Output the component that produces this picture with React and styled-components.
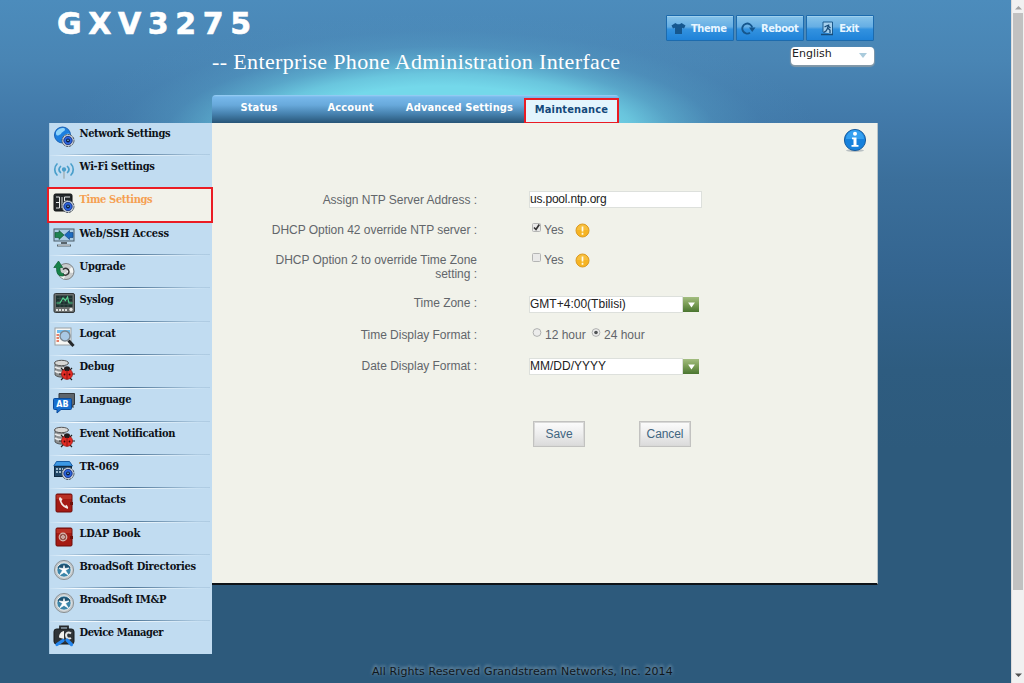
import React from 'react';
import styled, { createGlobalStyle } from 'styled-components';

const Global = createGlobalStyle`
  * { box-sizing: border-box; }
  body { margin: 0; overflow: hidden; background: #2d5a7c; font-family: "Liberation Sans", Arial, sans-serif; }
`;

const verdana = '"DejaVu Sans Condensed", "DejaVu Sans", Verdana, sans-serif';

const Screen = styled.div`
  display: flex;
  width: 1024px;
  height: 683px;
`;
const Page = styled.div`
  flex: 1;
  padding: 0 133px 0 49px;
  background:
    radial-gradient(ellipse 315px 104px at 442px 138px, #74d8ea 0%, #74d8ea 50%, rgba(112, 210, 230, 0.85) 62%, rgba(104, 196, 222, 0.55) 74%, rgba(92, 172, 208, 0.28) 88%, rgba(82, 152, 196, 0.1) 103%, rgba(76, 139, 187, 0) 120%),
    linear-gradient(#4c8cbc 0, #4985b4 60px, #427aaa 115px, #3b6f9b 180px, #346590 270px, #2e5c80 370px, #2d5a7c 450px);
`;
const Header = styled.header`
  display: flex;
  justify-content: space-between;
  height: 95px;
`;
const Brand = styled.div`
  display: flex;
  flex-direction: column;
  color: #fff;
`;
const Model = styled.h1`
  margin: 5px 0 0 8px;
  font: bold 30px/37px "DejaVu Sans", Verdana, sans-serif;
  letter-spacing: 6.6px;
  -webkit-text-stroke: 0.6px #fff;
`;
const Tagline = styled.div`
  margin: 6px 0 0 163px;
  font: 22px/28px "Liberation Serif", Georgia, serif;
  letter-spacing: 0.37px;
  white-space: nowrap;
`;
const Tools = styled.div`
  display: flex;
  flex-direction: column;
  align-items: flex-end;
  padding: 15px 4px 0 0;
`;
const ToolRow = styled.div`
  display: flex;
  gap: 2px;
`;
const ToolButton = styled.button`
  display: flex;
  align-items: center;
  justify-content: ${p => (p.$center ? 'center' : 'flex-start')};
  gap: 5px;
  width: 68px;
  height: 26px;
  padding: 1px 0 0 ${p => (p.$center ? 0 : 4)}px;
  border: 1px solid #1c6bae;
  border-radius: 1px;
  background: linear-gradient(#86c3ea 0, #65aee4 45%, #3392df 55%, #1f82d8 100%);
  box-shadow: inset 0 1px #9fd0ee;
  color: #e8f6ff;
  font: bold 11px/14px ${verdana};
  letter-spacing: -0.4px;
`;
const LanguageSelect = styled.div`
  display: flex;
  justify-content: space-between;
  width: 83px;
  height: 18px;
  margin-top: 6px;
  padding: 0 7px 0 1px;
  border-radius: 4px;
  background: #fff;
  box-shadow: 0 1px 1px 1px #8499a8;
  color: #222;
  font: 11px/14px "DejaVu Sans", Verdana, sans-serif;
  svg { margin-top: 6px; }
`;
const TabBar = styled.nav`
  display: flex;
  position: relative;
  width: 407px;
  height: 28px;
  margin-left: 163px;
  border-radius: 4px 4px 0 0;
  background: linear-gradient(#9bd0f5 0, #77b8eb 2px, #68a9db 10px, #4681ae 19px, #285577 28px);
`;
const Tab = styled.a`
  width: ${p => p.$w}px;
  color: #fff;
  text-align: center;
  font: bold 11px/25px ${verdana};
  letter-spacing: 0.15px;
  white-space: nowrap;
`;
const ActiveTab = styled(Tab)`
  align-self: flex-start;
  height: 26px;
  margin-top: 3px;
  border: 2px solid #ea1c24;
  background: #e3f5fd;
  color: #14497a;
  line-height: 20px;
`;
const Body = styled.div`
  display: flex;
  align-items: flex-start;
  height: 531px;
`;
const Sidebar = styled.ul`
  position: relative;
  z-index: 1;
  width: 163px;
  height: 531px;
  margin: 0;
  padding: 0;
  list-style: none;
  background: #c1dcf1;
  border-left: 1px solid #a9cbe4;
`;
const Item = styled.li`
  display: flex;
  height: 33.3px;
  padding: 3px 0 0 3px;
  gap: 4.5px;
  color: #0d1117;
  font: bold 11px/15px "DejaVu Serif Condensed", "DejaVu Serif", Georgia, serif;
  letter-spacing: ${p => p.$ls}px;
  white-space: nowrap;
  background: linear-gradient(90deg, rgba(255, 255, 255, .1), #f4fafe 15%, #e8f3fb 60%, rgba(255, 255, 255, 0)) 0 100% / 160px 1px no-repeat,
    linear-gradient(90deg, rgba(70, 110, 145, 0) 5%, #4e7596 50%, rgba(70, 110, 145, 0.15) 92%) 0 calc(100% - 1px) / 160px 1px no-repeat;
  svg { flex: none; }
`;
const SelectedItem = styled(Item)`
  position: relative;
  width: 166px;
  height: 36px;
  margin: -3px 0 0.3px -3px;
  padding: 3px 0 0 4px;
  border: 2px solid #ea1c24;
  background: #f2f2ea;
  color: #f5a052;
`;
const LastItem = styled(Item)`
  background: none;
`;
const Panel = styled.main`
  position: relative;
  width: 666px;
  height: 462px;
  padding-top: 62px;
  border-bottom: 2px solid #0e1318;
  border-right: 1px solid #b9c4c8;
  background: #f1f2ea;
`;
const Info = styled.svg`
  position: absolute;
  right: 10px;
  top: 5px;
`;
const Row = styled.div`
  display: grid;
  grid-template-columns: 265px 1fr;
  column-gap: 52px;
  height: ${p => p.$h || 30}px;
  padding-top: 8px;
  color: #62666a;
  font-size: 12px;
  line-height: 14px;
`;
const Label = styled.label`
  text-align: right;
  padding-left: 55px;
  letter-spacing: -0.03px;
`;
const Control = styled.div`
  display: flex;
  align-items: flex-start;
`;
const TextBox = styled.div`
  width: ${p => p.$w}px;
  height: 17px;
  margin-top: ${p => p.$top}px;
  border: 1px solid #dde0dc;
  background: #fff;
  color: #222;
  font-size: 12px;
  line-height: 15px;
  letter-spacing: ${p => p.$ls || -0.2}px;
`;
const DropButton = styled.div`
  display: flex;
  align-items: center;
  justify-content: center;
  width: 16px;
  height: 15px;
  margin-top: ${p => p.$top}px;
  background: linear-gradient(#a3bd80, #7d9f58 45%, #4a7530);
`;
const Check = styled.svg`
  margin: 0 3px 0 3px;
`;
const Word = styled.span`
  width: ${p => p.$w}px;
  letter-spacing: 0;
  white-space: nowrap;
`;
const Actions = styled.div`
  display: flex;
  gap: 54px;
  margin: 40px 0 0 321px;
`;
const Action = styled.button`
  width: 52px;
  height: 26px;
  padding: 0;
  border: 1px solid #c2c2c0;
  box-shadow: inset 0 0 0 1px #d9d9d8;
  background: linear-gradient(#fcfcfc, #ededed 50%, #dadada);
  color: #41657f;
  font: 12px/14px "Liberation Sans", Arial, sans-serif;
  letter-spacing: -0.1px;
`;
const Footer = styled.footer`
  margin: 11px 0 0 323px;
  color: #10161b;
  font: 11px/14px "DejaVu Sans", Verdana, sans-serif;
  letter-spacing: 0.1px;
  text-shadow: 0 -2px 3px #7897ad, 0 0 4px #6b8ca4;
  white-space: nowrap;
`;
const Scrollbar = styled.div`
  display: flex;
  flex-direction: column;
  align-items: center;
  justify-content: space-between;
  width: 14px;
  height: 683px;
  padding: 5px 0;
  border-left: 1px solid #dcdcdc;
  background: #f1f1f1;
`;
const Thumb = styled.div`
  width: 10px;
  height: 577px;
  margin: 3px 0 auto;
  background: #c1c1c1;
`;

const Gear = () => (
  <g>
    <circle cx="15" cy="14.500" r="6" fill="#d3dae0" stroke="#4a535e" strokeWidth="1" strokeDasharray="2.400 .6" />
    <circle cx="15" cy="14.500" r="4.200" fill="#2a62dc" stroke="#16307c" strokeWidth=".9" />
    <circle cx="15" cy="14.500" r="1.900" fill="#0b1a3c" />
    <circle cx="15" cy="14.300" r=".8" fill="#7fd0ff" />
  </g>
);
const Bug = () => (
  <g>
    <path d="M2 4v12c2 2 6 2.5 9 2V4z" fill="#8c8f90" stroke="#444" strokeWidth=".8" />
    <path d="M2 8c3 2 9 2 13 0M2 12c3 2 7 2 10 1" stroke="#e8e8e8" strokeWidth="2" fill="none" />
    <ellipse cx="8.5" cy="4" rx="7" ry="2.7" fill="#d8d8d6" stroke="#555" />
    <path d="M8 9l3 3m8-3-3 3M6 15h4m8 0h4M8 21l3-3m8 3-3-3" stroke="#222" strokeWidth="1.2" />
    <ellipse cx="14" cy="15" rx="5.6" ry="5.4" fill="#e22b24" stroke="#8a100e" strokeWidth=".6" />
    <path d="M11 9.500c0-3 6-3 6 0l-1 2.500h-4z" fill="#221d1e" />
    <path d="M14 11v9.5" stroke="#7a1212" strokeWidth=".8" />
    <circle cx="11.500" cy="15.500" r=".9" fill="#400" /><circle cx="16.500" cy="15.500" r=".9" fill="#400" />
  </g>
);
const Broad = () => (
  <g>
    <circle cx="11" cy="11" r="9.6" fill="#c5c9cb" stroke="#8b9296" />
    <circle cx="11" cy="11" r="7.2" fill="#3a84a8" stroke="#f3f5f6" strokeWidth=".9" />
    <path d="M4.5 9C7 3.500 15 3.500 17.500 9L11 11z" fill="#1f5271" />
    <path d="M11 6.500l.8 3 4.200-.5-3.500 2.500 2.800 4.500-4.300-2.600-4.300 2.600 2.800-4.500L6 9l4.200.5z" fill="#fff" stroke="#fff" strokeWidth=".7" />
  </g>
);
const Book = ({ children }) => (
  <g>
    <rect x="3" y="2" width="16" height="18" rx="1.2" fill="#a51b14" stroke="#6c0d0a" />
    <path d="M3.500 3h15v4h-15z" fill="#c23a2c" opacity=".7" />
    <path d="M17 10h3v3h-3z" fill="#6e100b" />
    {children}
  </g>
);

const icons = {
  network: (
    <g>
      <circle cx="9.500" cy="9" r="8" fill="#1d7fdf" stroke="#1c62b5" />
      <path d="M3 6c2-4 8-5 9-3 0 3-3 2-4 5-2 1-4 3-5 0zm8 4c2-3 5-3 6-2l-1 4-4 1z" fill="#8fd4fa" />
      <Gear />
    </g>
  ),
  wifi: (
    <g fill="none" stroke="#4a9fcb" strokeWidth="1.7" strokeLinecap="round">
      <path d="M4 5c-3 3-3 8 0 11M7.500 7.500c-2 2-2 4 0 6M18 5c3 3 3 8 0 11M14.500 7.500c2 2 2 4 0 6" />
      <path d="M11 12v7" stroke="#a7b7be" />
      <circle cx="11" cy="10.500" r="1.300" fill="#4a9fcb" />
    </g>
  ),
  time: (
    <g>
      <rect x="1" y="2" width="18" height="17" rx="1.500" fill="#24282a" stroke="#0e1011" />
      <path d="M3 5h3.500v11H3M3 10.500h3M9 5v11M11.500 5H17M11.500 5v4H15M12 12v4" stroke="#e4e7e7" fill="none" />
      <Gear />
    </g>
  ),
  web: (
    <g>
      <rect x="1" y="3" width="20" height="12" fill="#a9cce3" stroke="#4c5d68" />
      <path d="M2 6.500h4V4.500l5 4.500-5 4.500v-2H2z" fill="#1f8350" stroke="#0d4d2c" strokeWidth=".6" />
      <path d="M20 6.500h-3.500V4.500l-5 4.500 5 4.500v-2H20z" fill="#1b6bc0" stroke="#0e3c78" strokeWidth=".6" />
      <path d="M8 17h6M4 19.500h14" stroke="#59656c" strokeWidth="2" /><path d="M5 19.200h12" stroke="#fff" strokeWidth=".7" />
    </g>
  ),
  upgrade: (
    <g>
      <circle cx="13" cy="12.500" r="8" fill="#c9cccd" stroke="#7f8385" />
      <path d="M13 13l6-5a8 8 0 0 1 1 6zM13 13l-6 4a8 8 0 0 0 4 3z" fill="#f4f5f3" />
      <path d="M10 10.500c2-2.500 6-1 6 2.200s-4 4.500-6.500 2.500" fill="none" stroke="#333" strokeWidth="1.500" />
      <path d="M10.500 17c-6 .5-7-3-7-8.500H.8L5.500 2l4.200 6.500H7c0 4 .5 6 3.500 6z" fill="#17834a" stroke="#0d5c32" strokeWidth=".7" />
    </g>
  ),
  syslog: (
    <g>
      <rect x="1" y="1.500" width="20.500" height="19" rx="1.500" fill="#6a6d6c" stroke="#33383a" />
      <rect x="3" y="3.500" width="16.500" height="11.500" fill="#1e3230" />
      <path d="M4 6.500h15M4 9.500h15M4 12.500h15M7 4v11M11 4v11M15 4v11" stroke="#3f5753" strokeWidth=".6" />
      <path d="M3.500 11h3.500l3-5 2.500 2.500L14.500 5l1.500 6h3.500" fill="none" stroke="#58d391" strokeWidth="1.100" />
      <path d="M3 18h11" stroke="#e0e1df" strokeWidth="1.800" strokeDasharray="2 1" /><circle cx="18" cy="17.500" r="1.700" fill="#e7e7e5" />
    </g>
  ),
  logcat: (
    <g>
      <rect x="2" y="2" width="16" height="17" fill="#f7f7f4" stroke="#9aa0a4" />
      <path d="M4 4h13v3H4z" fill="#70bdf0" />
      <path d="M3.500 9h2.500M3.500 12h2.500M3.500 15h2.500" stroke="#df5738" strokeWidth="1.500" />
      <circle cx="12" cy="10" r="5" fill="#a9c9e5" stroke="#7b868f" strokeWidth="1.400" />
      <path d="M15.500 14.500l5 5.500" stroke="#25282b" strokeWidth="3" />
    </g>
  ),
  bug: <Bug />,
  language: (
    <g>
      <path d="M6 1.500h15.500v11H20v3l-3-3H6z" fill="#5d646b" stroke="#34393e" />
      <path d="M1.500 6.500h16a1 1 0 0 1 1 1v9a1 1 0 0 1-1 1H8l-4 3.500v-3.500H1.500a1 1 0 0 1-1-1v-9a1 1 0 0 1 1-1z" fill="#176fcf" stroke="#0b4b9b" />
      <text x="9.500" y="15" textAnchor="middle" fill="#fff" fontFamily="DejaVu Sans" fontWeight="700" fontSize="8" letterSpacing="0">AB</text>
    </g>
  ),
  tr: (
    <g>
      <path d="M3.500 2.500h13l3 4.500H.8z" fill="#3b98e4" stroke="#1a5ea5" />
      <rect x="1.500" y="7.500" width="17" height="10" fill="#204667" stroke="#102a42" />
      <path d="M3 10h7M3 13h7" stroke="#c6dff0" strokeWidth="1.500" strokeDasharray="2 1" />
      <Gear />
    </g>
  ),
  contacts: <Book><path d="M7 5.500c0 5 3 9.500 8 10.500" fill="none" stroke="#f4e9e5" strokeWidth="1.800" /><path d="M6.500 6.500l2.500 1.500M12.500 15.500l1.500-2" stroke="#f4e9e5" strokeWidth="2.200" /></Book>,
  ldap: <Book><circle cx="10" cy="11" r="3.800" fill="#94544b" stroke="#d7bab2" strokeWidth="1.200" /><circle cx="10" cy="11" r="1.300" fill="none" stroke="#efdcd7" /></Book>,
  broad: <Broad />,
  device: (
    <g>
      <path d="M7 4V1.500h8V4" fill="none" stroke="#26292c" strokeWidth="1.800" />
      <rect x="1" y="4" width="20" height="15" rx="2.500" fill="#303437" stroke="#17191b" />
      <path d="M6 12.500c0-3.500 2-6 5-6.500v8z" fill="#f2f2ef" />
      <path d="M18 8.500c-3-2.500-6 0-4.500 3.500.8 1.800 3 2 4.500 1" fill="none" stroke="#e5e8e8" strokeWidth="2" />
      <path d="M4 19.500l6-4M14 15l4.500 4.500" stroke="#2586ee" strokeWidth="3.300" strokeLinecap="round" />
    </g>
  ),
};
const Icon = ({ name }) => <svg width="22" height="22" viewBox="0 0 22 22">{icons[name]}</svg>;

const above = [['network', 'Network Settings', -0.37], ['wifi', 'Wi-Fi Settings', -0.28]];
const below = [
  ['web', 'Web/SSH Access', -0.12], ['upgrade', 'Upgrade', -0.15], ['syslog', 'Syslog', -0.25], ['logcat', 'Logcat', -0.25], ['bug', 'Debug', -0.25],
  ['language', 'Language', -0.33], ['bug', 'Event Notification', -0.32], ['tr', 'TR-069', -0.15], ['contacts', 'Contacts', -0.35],
  ['ldap', 'LDAP Book', -0.22], ['broad', 'BroadSoft Directories', -0.24], ['broad', 'BroadSoft IM&P', -0.35],
];
const menu = ([icon, text, ls]) => <Item key={text} $ls={ls}><Icon name={icon} /><span>{text}</span></Item>;

const Warning = () => (
  <svg width="15" height="16" viewBox="0 0 15 16">
    <circle cx="7.500" cy="7.500" r="6.500" fill="#f6b423" stroke="#dc9a20" />
    <path d="M2 7a5.500 5.500 0 0 1 11 0z" fill="#f9c750" opacity=".6" />
    <path d="M7.500 3.500v5M7.500 9.800v2" stroke="#fffbe8" strokeWidth="1.700" />
  </svg>
);
const Box = ({ checked }) => (
  <Check width="9" height="9" viewBox="0 0 9 9">
    <rect x=".5" y=".5" width="8" height="8" rx="1" fill="#e9e9e8" stroke="#b4b5b4" />
    {checked && <path d="M2 4.500l2 2 3.300-5" fill="none" stroke="#333" strokeWidth="1.700" />}
  </Check>
);
const Radio = ({ checked }) => (
  <Check width="10" height="9" viewBox="0 0 10 9">
    <circle cx="5" cy="4.500" r="3.900" fill="#ececeb" stroke="#b0b1b0" />
    {checked && <circle cx="5" cy="4.500" r="1.800" fill="#505354" />}
  </Check>
);
const Select = ({ children, top, ls }) => (
  <>
    <TextBox $w={154} $top={top} $ls={ls}>{children}</TextBox>
    <DropButton $top={top + 1}>
      <svg width="7" height="6" viewBox="0 0 8 7"><path d="M0 .5h8L4 6.500z" fill="#fff" /></svg>
    </DropButton>
  </>
);

export default function App() {
  return (
    <Screen>
      <Global />
      <Page>
        <Header>
          <Brand>
            <Model>GXV3275</Model>
            <Tagline>-- Enterprise Phone Administration Interface</Tagline>
          </Brand>
          <Tools>
            <ToolRow>
              <ToolButton>
                <svg width="15" height="13" viewBox="0 0 15 13"><path d="M4.500 1C6 2.800 9 2.800 10.500 1L14.500 3.500 13 6.500 11 5.800V12H4V5.800L2 6.500.5 3.500z" fill="#15578f" /></svg>
                Theme
              </ToolButton>
              <ToolButton>
                <svg width="15" height="13" viewBox="0 0 15 13"><path d="M9 10.800A5 5 0 1 1 11.200 5.500" fill="none" stroke="#15568d" strokeWidth="1.900" /><path d="M8 5.500h6.500L11.200 10z" fill="#15568d" /></svg>
                Reboot
              </ToolButton>
              <ToolButton $center>
                <svg width="13" height="15" viewBox="0 0 13 15"><path d="M2 11V1h9.500v12" fill="#a5d0ee" stroke="#1c5a8c" /><path d="M0 13.500h12M8 3.500L6.500 7 9 9v3M6.500 7.500L5 10 2.500 11.500M3.500 6l3-1.500 3 2.500" stroke="#174b78" strokeWidth="1.300" fill="none" /></svg>
                Exit
              </ToolButton>
            </ToolRow>
            <LanguageSelect>
              English
              <svg width="8" height="5" viewBox="0 0 8 5"><path d="M0 0h8L4 5z" fill="#aacbdc" /></svg>
            </LanguageSelect>
          </Tools>
        </Header>
        <TabBar>
          <Tab $w={94}>Status</Tab>
          <Tab $w={89}>Account</Tab>
          <Tab $w={129}>Advanced Settings</Tab>
          <ActiveTab $w={95}>Maintenance</ActiveTab>
        </TabBar>
        <Body>
          <Sidebar>
            {above.map(menu)}
            <SelectedItem $ls={-0.35}><Icon name="time" /><span>Time Settings</span></SelectedItem>
            {below.map(menu)}
            <LastItem $ls={-0.43}><Icon name="device" /><span>Device Manager</span></LastItem>
          </Sidebar>
          <Panel>
            <Info width="24" height="25" viewBox="0 0 24 25">
              <ellipse cx="12" cy="22.500" rx="9" ry="1.500" fill="#b8bfc2" />
              <circle cx="12" cy="12" r="10.600" fill="#1681dc" stroke="#1b5f9f" />
              <path d="M3 11a9 9 0 0 1 18 0z" fill="#34a0f0" />
              <circle cx="12" cy="5.800" r="2" fill="#fff" />
              <path d="M9 9.500h4.500v7.500H15.500v1.800h-7V17H10.500v-5.700H9z" fill="#fff" />
            </Info>
            <Row>
              <Label>Assign NTP Server Address :</Label>
              <Control><TextBox $w={173} $top={-2}>us.pool.ntp.org</TextBox></Control>
            </Row>
            <Row>
              <Label>DHCP Option 42 override NTP server :</Label>
              <Control><Box checked /><Word $w={31}>Yes</Word><Warning /></Control>
            </Row>
            <Row $h={43}>
              <Label>DHCP Option 2 to override Time Zone setting :</Label>
              <Control><Box /><Word $w={31}>Yes</Word><Warning /></Control>
            </Row>
            <Row $h={32}>
              <Label>Time Zone :</Label>
              <Control><Select top={0} ls={0.01}>GMT+4:00(Tbilisi)</Select></Control>
            </Row>
            <Row $h={31}>
              <Label>Time Display Format :</Label>
              <Control><Radio /><Word $w={43}>12 hour</Word><Radio checked /><Word $w={43}>24 hour</Word></Control>
            </Row>
            <Row>
              <Label>Date Display Format :</Label>
              <Control><Select top={-1} ls={0.01}>MM/DD/YYYY</Select></Control>
            </Row>
            <Actions>
              <Action>Save</Action>
              <Action>Cancel</Action>
            </Actions>
          </Panel>
        </Body>
        <Footer>All Rights Reserved Grandstream Networks, Inc. 2014</Footer>
      </Page>
      <Scrollbar>
        <svg width="7" height="5" viewBox="0 0 7 5"><path d="M0 4.500L3.500 1 7 4.500z" fill="#a3a3a3" /></svg>
        <Thumb />
        <svg width="7" height="5" viewBox="0 0 7 5"><path d="M0 .5h7L3.500 4z" fill="#505050" /></svg>
      </Scrollbar>
    </Screen>
  );
}
